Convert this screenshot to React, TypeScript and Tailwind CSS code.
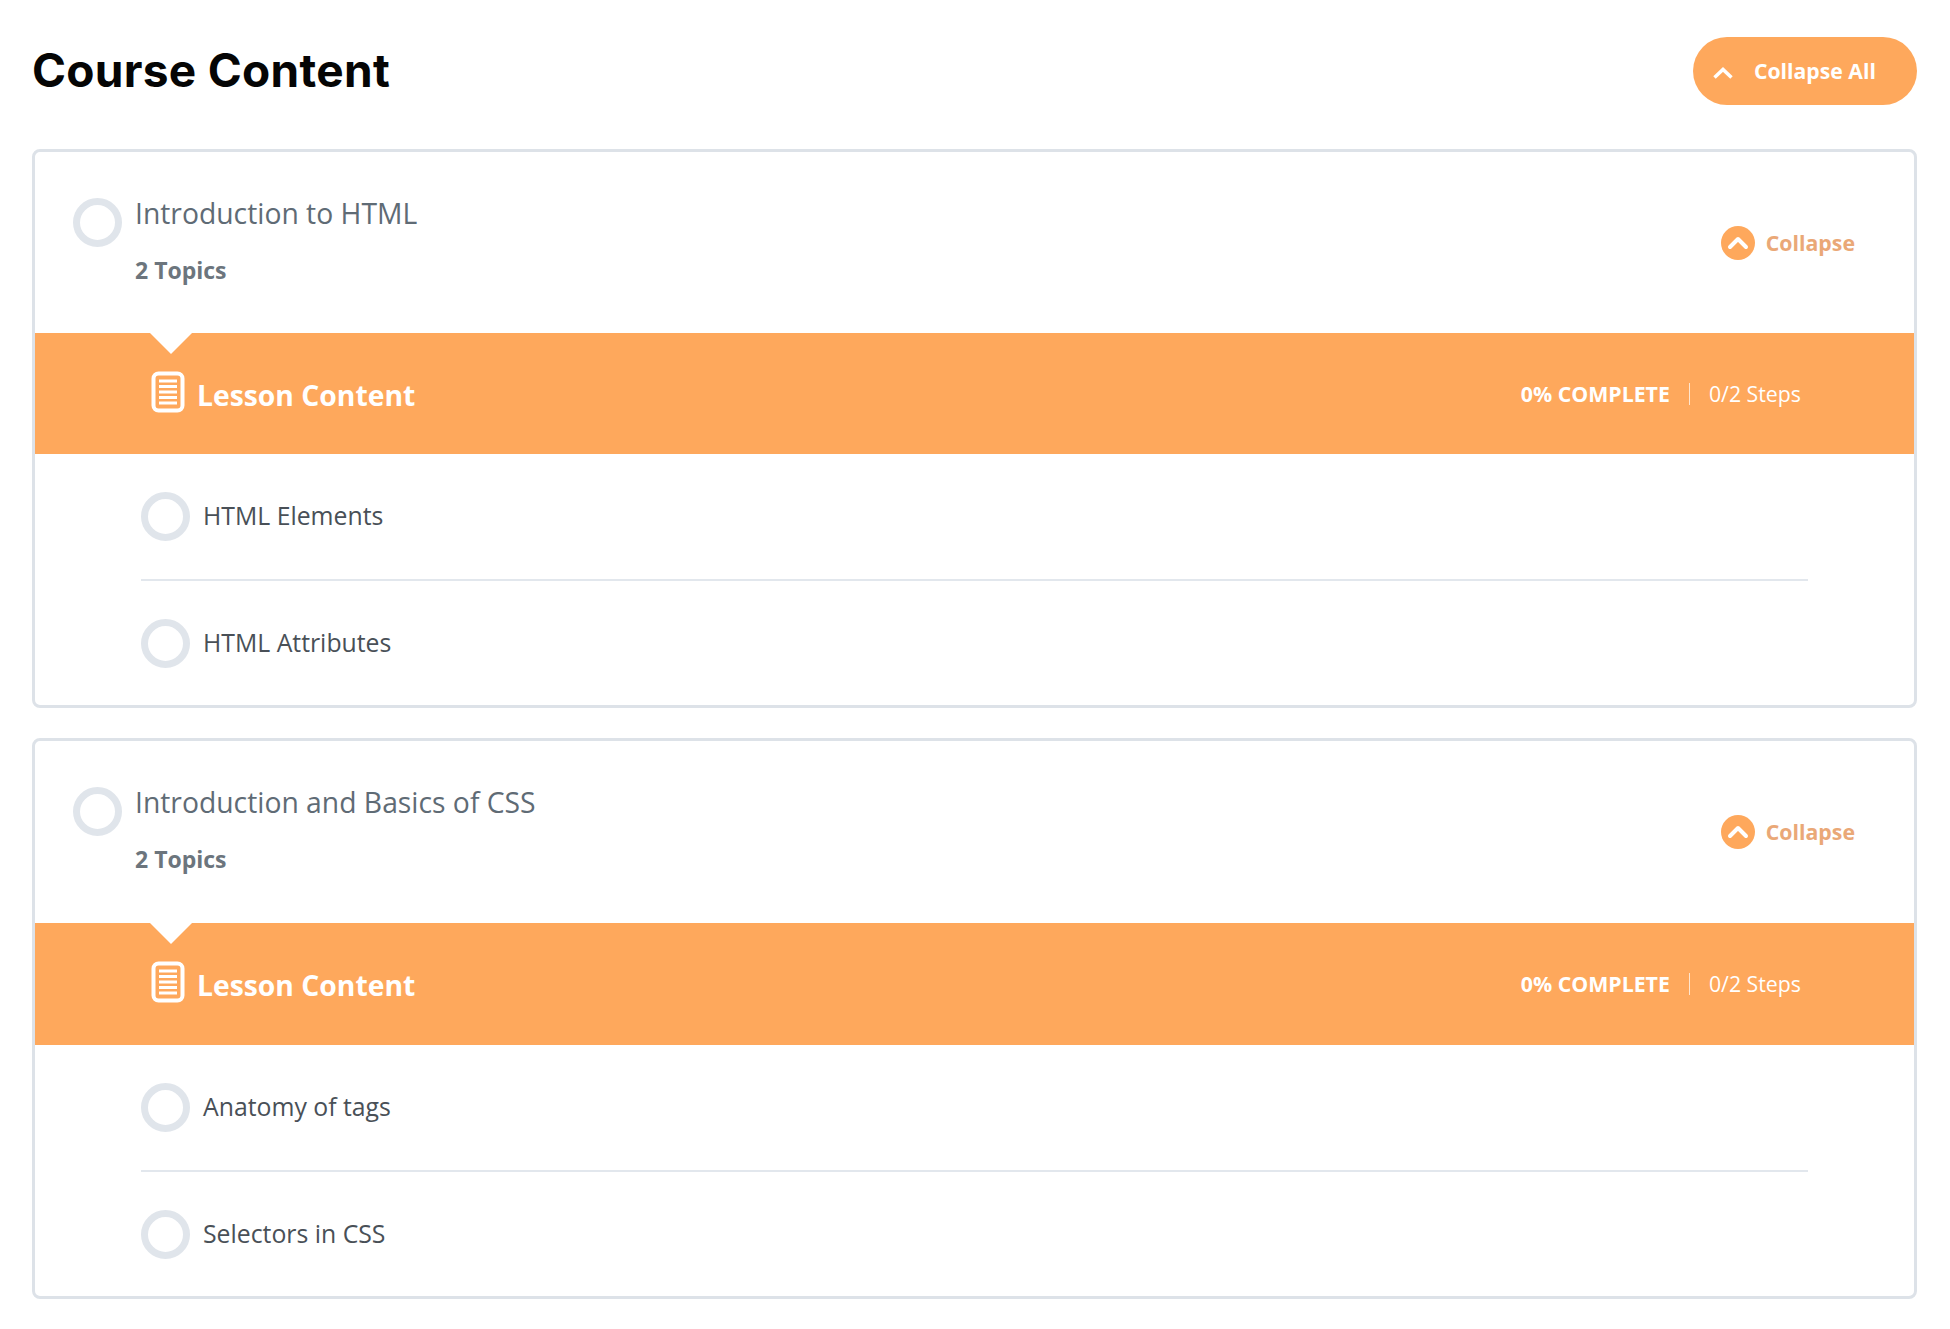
const sections = [
  { title: "Introduction to HTML", lessons: ["HTML Elements", "HTML Attributes"], headH: "h-[181px]", bandH: "h-[121px]" },
  { title: "Introduction and Basics of CSS", lessons: ["Anatomy of tags", "Selectors in CSS"], headH: "h-[182px]", bandH: "h-[122px]" },
];

function LessonIcon() {
  return (
    <svg width="34" height="42" viewBox="0 0 34 42" fill="none" className="shrink-0 -mt-[4px]">
      <rect x="2.500" y="2.500" width="29" height="37" rx="5" stroke="#fff" strokeWidth="4" fill="none" />
      <path d="M8 10h18M8 15.500h18M8 21h18M8 26.500h18M8 32h18" stroke="#fff" strokeWidth="3" />
    </svg>
  );
}

function Ring() {
  return <div className="w-[49px] h-[49px] shrink-0 rounded-full border-[7px] border-[#e0e5eb] bg-white" />;
}

type SectionProps = { title: string; lessons: string[]; headH: string; bandH: string };

function Section({ title, lessons, headH, bandH }: SectionProps) {
  return (
    <section className="border-[3px] border-[#dde2e8] rounded-lg bg-white">
      <div className={`${headH} flex items-start justify-between pl-[38px] pr-[59px]`}>
        <div className="flex gap-[13px] pt-[46px]">
          <Ring />
          <div className="-mt-[4px]">
            <h2 className="text-[28.300px] leading-[38px] text-[#5f6b75]">{title}</h2>
            <p className="mt-[24px] text-[23px] leading-[28px] font-bold text-[#6c757d]">2 Topics</p>
          </div>
        </div>
        <button type="button" className="mt-[74px] flex items-center gap-[11px] text-[21.300px] leading-[34px] font-bold text-[#eaa877]">
          <span className="w-[34px] h-[34px] rounded-full bg-[#fea85c] flex items-center justify-center">
            <svg width="22" height="14" viewBox="0 0 22 14" fill="none">
              <path d="M3 11l8-8 8 8" stroke="#fff" strokeWidth="4" strokeLinecap="round" strokeLinejoin="round" />
            </svg>
          </span>
          Collapse
        </button>
      </div>

      <div className={`relative ${bandH} bg-[#fea85c] flex items-center justify-between pl-[116px] pr-[113px] text-white`}>
        <div className="absolute left-[115px] top-0 w-0 h-0 border-x-[21px] border-x-transparent border-t-[21px] border-t-white" />
        <div className="flex items-center gap-[12px]">
          <LessonIcon />
          <span className="text-[28.300px] leading-[36px] font-bold mt-[2px]">Lesson Content</span>
        </div>
        <div className="flex items-center text-[21.300px] leading-[28px]">
          <span className="font-bold">0% COMPLETE</span>
          <span className="mx-[19px] w-px h-[22px] bg-white/70" />
          <span>0/2 Steps</span>
        </div>
      </div>

      <ul className="mx-[106px]">
        {lessons.map((lesson, i) => (
          <li
            key={lesson}
            className={`flex items-center gap-[13px] ${i === 0 ? "h-[127px] border-b-2 border-[#e2e7ed]" : "h-[124px]"}`}
          >
            <Ring />
            <span className="text-[24.800px] leading-[32px] text-[#495057] -mt-[3px]">{lesson}</span>
          </li>
        ))}
      </ul>
    </section>
  );
}

export default function App() {
  return (
    <main className="min-h-screen bg-white pl-[32px] pr-[33px] pt-[37px] font-['Open_Sans',sans-serif]">
      <header className="flex items-center justify-between mb-[44px]">
        <h1 className="text-[46px] leading-[68px] font-bold tracking-[0.3px] -mt-[2px] text-[#050505] font-['Inter',sans-serif]">
          Course Content
        </h1>
        <button type="button" className="h-[68px] w-[224px] rounded-full bg-[#fea85c] flex items-center pl-[19px] gap-[20px] text-white text-[21.200px] font-bold">
          <svg width="22" height="14" viewBox="0 0 22 14" fill="none" className="mt-[4px]">
            <path d="M2.500 11.500L11 3.500l8.500 8" stroke="#fff" strokeWidth="3.500" />
          </svg>
          <span>Collapse All</span>
        </button>
      </header>
      <div className="flex flex-col gap-[30px]">
        {sections.map((s) => (
          <Section key={s.title} {...s} />
        ))}
      </div>
    </main>
  );
}
